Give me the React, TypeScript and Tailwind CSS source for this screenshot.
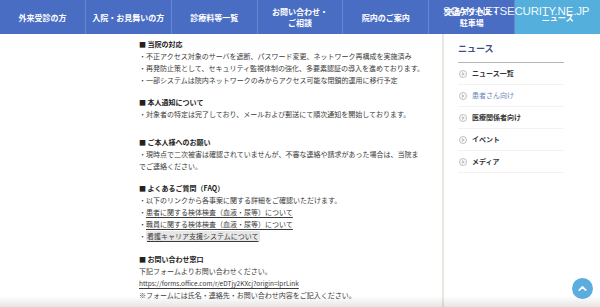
import { ChevronUp } from 'lucide-react'

const NAV = [
  { label: ['外来受診の方'] },
  { label: ['入院・お見舞いの方'] },
  { label: ['診療料等一覧'] },
  { label: ['お問い合わせ・', 'ご相談'] },
  { label: ['院内のご案内'] },
  { label: ['交通アクセス・', '駐車場'] },
  { label: ['ニュース'], active: true },
]

const NEWS = [
  { label: 'ニュース一覧' },
  { label: '患者さん向け', active: true },
  { label: '医療関係者向け' },
  { label: 'イベント' },
  { label: 'メディア' },
]

function PlayCircle() {
  return (
    <svg width="8" height="8" viewBox="0 0 16 16" className="shrink-0">
      <circle cx="8" cy="8" r="7" fill="none" stroke="#9a9a9a" strokeWidth="1.3" />
      <path d="M6.5 5.2 L10.6 8 L6.5 10.8 Z" fill="none" stroke="#9a9a9a" strokeWidth="1.2" strokeLinejoin="round" />
    </svg>
  )
}

function Heading({ children, className = '' }: { children: React.ReactNode; className?: string }) {
  return <p className={`font-bold text-[#222] ${className}`}>■ {children}</p>
}

function Bullet({ children }: { children: React.ReactNode }) {
  return <p>・{children}</p>
}

function LinkText({ children, hl }: { children: React.ReactNode; hl?: boolean }) {
  return (
    <span className={`underline underline-offset-[1.5px] ${hl ? 'bg-[#e6e6e6] px-[1px]' : ''}`}>{children}</span>
  )
}

export default function App() {
  return (
    <div className="relative h-[307px] w-[600px] overflow-hidden bg-white font-['Noto_Sans_CJK_JP','Noto_Sans',sans-serif]">
      {/* global nav */}
      <nav className="flex h-[34px] bg-[#4a6dc4] text-white">
        {NAV.map((n, i) => (
          <div
            key={i}
            className={`flex flex-1 flex-col items-center justify-center text-[8px] font-bold leading-[11px] ${
              i > 0 ? 'border-l border-[#6586d2]' : ''
            } ${n.active ? 'bg-[#55afdc]' : ''}`}
          >
            {n.label.map((l) => (
              <span key={l}>{l}</span>
            ))}
          </div>
        ))}
      </nav>

      <div className="flex h-[273px]">
        {/* article */}
        <main className="flex-1 whitespace-nowrap pl-[139px] pt-[4px] text-[7px] leading-[12px] text-[#3a3a3a]">
          <Heading>当院の対応</Heading>
          <Bullet>不正アクセス対象のサーバを遮断、パスワード変更、ネットワーク再構成を実施済み</Bullet>
          <Bullet>再発防止策として、セキュリティ監視体制の強化、多要素認証の導入を進めております。</Bullet>
          <Bullet>一部システムは院内ネットワークのみからアクセス可能な閉鎖的運用に移行予定</Bullet>

          <Heading className="mt-[10px]">本人通知について</Heading>
          <Bullet>対象者の特定は完了しており、メールおよび郵送にて順次通知を開始しております。</Bullet>

          <Heading className="mt-[16px]">ご本人様へのお願い</Heading>
          <Bullet>現時点で二次被害は確認されていませんが、不審な連絡や請求があった場合は、当院ま</Bullet>
          <p>でご連絡ください。</p>

          <Heading className="mt-[10px]">よくあるご質問（FAQ）</Heading>
          <Bullet>以下のリンクから各事案に関する詳細をご確認いただけます。</Bullet>
          <Bullet>
            <LinkText>患者に関する検体検査（血液・尿等）について</LinkText>
          </Bullet>
          <Bullet>
            <LinkText>職員に関する検体検査（血液・尿等）について</LinkText>
          </Bullet>
          <Bullet>
            <LinkText hl>看護キャリア支援システムについて</LinkText>
          </Bullet>

          <Heading className="mt-[11px]">お問い合わせ窓口</Heading>
          <p>下記フォームよりお問い合わせください。</p>
          <p className="text-[6.5px]">
            <LinkText>https://forms.office.com/r/eDTjy2KXcj?origin=lprLink</LinkText>
          </p>
          <p>※フォームには氏名・連絡先・お問い合わせ内容をご記入ください。</p>
        </main>

        {/* side nav */}
        <aside className="w-[158px] border-l-2 border-[#ebe7e0] pl-[14px] pr-[36px]">
          <h2 className="border-b border-[#b5b5b5] pb-[8px] pt-[10px] text-[9px] font-bold leading-[10px] text-[#3e4f86]">
            ニュース
          </h2>
          <ul>
            {NEWS.map((n) => (
              <li
                key={n.label}
                className="flex h-[22px] items-center gap-[5px] border-b border-[#f3f3f3] pl-[1px] text-[7px]"
              >
                <PlayCircle />
                <span className={n.active ? 'text-[#6c87bb]' : 'font-semibold text-[#333]'}>{n.label}</span>
              </li>
            ))}
          </ul>
        </aside>
      </div>

      {/* watermark */}
      <div className="pointer-events-none absolute left-[443px] top-[4px] font-['Liberation_Sans',sans-serif] text-[11.5px] leading-[14px] tracking-[-0.2px] text-white/95">
        SCAN:NETSECURITY.NE.JP
      </div>

      {/* page top button */}
      <button className="absolute bottom-[8px] right-[7px] flex h-[21px] w-[21px] items-center justify-center rounded-full bg-[#5badde] text-white">
        <ChevronUp size={13} strokeWidth={3} />
      </button>

      {/* video bottom fade */}
      <div className="pointer-events-none absolute inset-x-0 bottom-0 h-[11px] bg-gradient-to-b from-transparent to-black/10" />
    </div>
  )
}
